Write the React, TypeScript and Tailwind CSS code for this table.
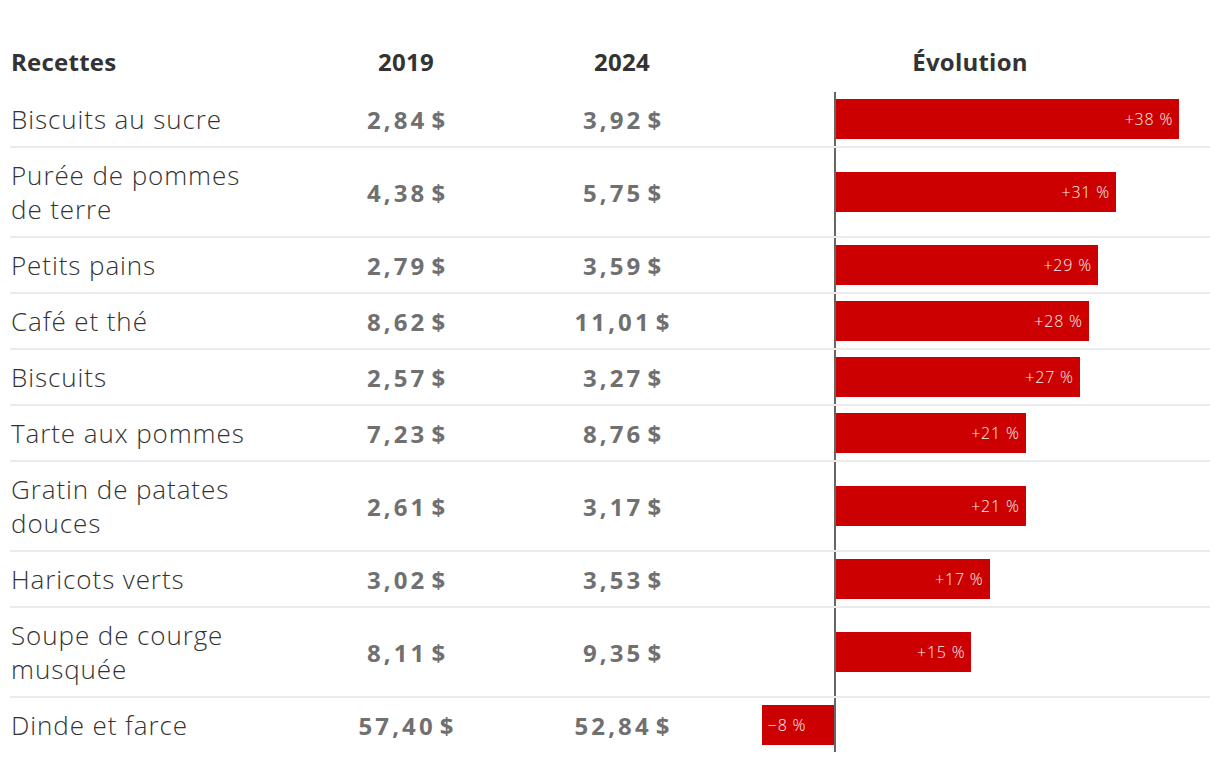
import React from "react";

type Row = { name: string[]; y2019: string; y2024: string; pct: number };

const ROWS: Row[] = [
  { name: ["Biscuits au sucre"], y2019: "2,84", y2024: "3,92", pct: 38 },
  { name: ["Purée de pommes", "de terre"], y2019: "4,38", y2024: "5,75", pct: 31 },
  { name: ["Petits pains"], y2019: "2,79", y2024: "3,59", pct: 29 },
  { name: ["Café et thé"], y2019: "8,62", y2024: "11,01", pct: 28 },
  { name: ["Biscuits"], y2019: "2,57", y2024: "3,27", pct: 27 },
  { name: ["Tarte aux pommes"], y2019: "7,23", y2024: "8,76", pct: 21 },
  { name: ["Gratin de patates", "douces"], y2019: "2,61", y2024: "3,17", pct: 21 },
  { name: ["Haricots verts"], y2019: "3,02", y2024: "3,53", pct: 17 },
  { name: ["Soupe de courge", "musquée"], y2019: "8,11", y2024: "9,35", pct: 15 },
  { name: ["Dinde et farce"], y2019: "57,40", y2024: "52,84", pct: -8 },
];

// px per percentage point
const SCALE = 9.03;

function Price({ value }: { value: string }) {
  return (
    <span className="text-[24px] font-bold text-[#707070] tracking-[0.13em] whitespace-nowrap">
      {value}
      <span className="tracking-normal">&thinsp;$</span>
    </span>
  );
}

function Bar({ pct }: { pct: number }) {
  const w = Math.abs(pct) * SCALE;
  const label = pct < 0 ? `−${Math.abs(pct)} %` : `+${pct} %`;
  return (
    <div className="flex h-full">
      {/* negative side */}
      <div className="w-[104px] flex items-center justify-end">
        {pct < 0 && (
          <div
            className="h-[40px] bg-[#cc0000] flex items-center justify-start pl-[6px] text-[16px] font-light tracking-[0.05em] text-[#f4f4f4]"
            style={{ width: w }}
          >
            {label}
          </div>
        )}
      </div>
      <div className="w-[2px] bg-[#666666]" />
      <div className="flex-1 flex items-center">
        {pct >= 0 && (
          <div
            className="h-[40px] bg-[#cc0000] flex items-center justify-end pr-[6px] text-[16px] font-light tracking-[0.05em] text-[#f4f4f4]"
            style={{ width: w }}
          >
            {label}
          </div>
        )}
      </div>
    </div>
  );
}

export default function App() {
  return (
    <div className="bg-white min-h-[762px] w-[1220px] pt-[40px] px-[10px] font-['Open_Sans','Liberation_Sans',sans-serif] text-[#333333]">
      <div className="w-[1200px]">
        {/* Header */}
        <div className="grid grid-cols-[288px_216px_216px_480px] h-[52px] pb-[8px] items-center text-[24px] font-bold tracking-[0.01em] text-[#333333]">
          <div className="pl-[1px]">Recettes</div>
          <div className="text-center">2019</div>
          <div className="text-center">2024</div>
          <div className="text-center">Évolution</div>
        </div>

        {/* Body */}
        {ROWS.map((r, i) => (
          <div
            key={r.name.join(" ")}
            className={`grid grid-cols-[288px_216px_216px_480px] ${
              i < ROWS.length - 1 ? "border-b-2 border-[#ebebeb]" : ""
            }`}
          >
            <div className="py-[10px] pl-[1px] text-[26px] font-light leading-[34px] tracking-[0.035em] text-[#333333]">
              {r.name.map((n) => (
                <div key={n}>{n}</div>
              ))}
            </div>
            <div className="flex items-center justify-center pt-[2px]">
              <Price value={r.y2019} />
            </div>
            <div className="flex items-center justify-center pt-[2px]">
              <Price value={r.y2024} />
            </div>
            <div>
              <Bar pct={r.pct} />
            </div>
          </div>
        ))}
      </div>
    </div>
  );
}
